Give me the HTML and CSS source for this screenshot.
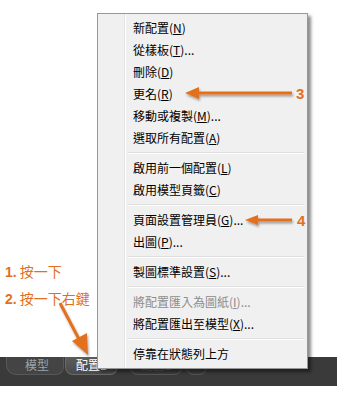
FILE: index.html
```html
<!DOCTYPE html>
<html lang="zh-Hant">
<head>
  <meta charset="UTF-8" />
  <meta name="viewport" content="width=device-width, initial-scale=1" />
  <title>配置頁籤選單</title>
  <link rel="stylesheet" href="styles.css">
</head>
<body>
  <main class="stage">
    <div class="notes">
      <p class="note"><b>1.</b> 按一下</p>
      <p class="note"><b>2.</b> 按一下右鍵</p>
    </div>

    <!-- layout tabs at the bottom of the drawing area -->
    <nav class="tabbar">
      <div class="tabs">
        <span class="tab tab-model">模型</span>
        <span class="tab tab-active">配置1</span>
        <span class="tab tab-dim">配置2</span>
        <span class="tab tab-add">+</span>
      </div>
    </nav>

    <!-- context menu opened on the layout tab -->
    <ul class="menu" role="menu">
      <li class="item">新配置(<u>N</u>)</li>
      <li class="item">從樣板(<u>T</u>)...</li>
      <li class="item">刪除(<u>D</u>)</li>
      <li class="item">更名(<u>R</u>)</li>
      <li class="item">移動或複製(<u>M</u>)...</li>
      <li class="item">選取所有配置(<u>A</u>)</li>
      <li class="sep"></li>
      <li class="item">啟用前一個配置(<u>L</u>)</li>
      <li class="item">啟用模型頁籤(<u>C</u>)</li>
      <li class="sep"></li>
      <li class="item">頁面設置管理員(<u>G</u>)...</li>
      <li class="item">出圖(<u>P</u>)...</li>
      <li class="sep"></li>
      <li class="item">製圖標準設置(<u>S</u>)...</li>
      <li class="sep"></li>
      <li class="item disabled">將配置匯入為圖紙(<u>I</u>)...</li>
      <li class="item">將配置匯出至模型(<u>X</u>)...</li>
      <li class="sep"></li>
      <li class="item">停靠在狀態列上方</li>
    </ul>

    <svg class="arrows" width="352" height="396" viewBox="0 0 352 396" aria-hidden="true">
      <defs>
        <filter id="shade" x="-10%" y="-10%" width="130%" height="150%">
          <feDropShadow dx="1" dy="2" stdDeviation="1" flood-color="#000" flood-opacity="0.35"/>
        </filter>
      </defs>
      <g filter="url(#shade)" fill="#e36f1e" stroke="#e36f1e">
        <line x1="196" y1="93" x2="292" y2="93" stroke-width="3"/>
        <polygon points="185,93 199,87 199,99" stroke="none"/>
        <line x1="255" y1="220" x2="292" y2="220" stroke-width="3"/>
        <polygon points="245,220 258,215 258,225" stroke="none"/>
        <line x1="60" y1="303" x2="80" y2="341" stroke-width="3"/>
        <polygon points="88,355 72,341 87,333" stroke="none"/>
      </g>
      <text x="296" y="99" class="num">3</text>
      <text x="297" y="226" class="num">4</text>
    </svg>
  </main>
</body>
</html>
```

FILE: styles.css
```css
:root {
  --orange: #e36f1e;
  --menu-bg: #f0f0f0;
  --menu-border: #979797;
  --cjk: "Noto Sans CJK TC", "Noto Sans", sans-serif;
}
body {
  margin: 0;
  background: #fff;
  font-family: var(--cjk);
}
.stage {
  position: relative;
  width: 352px;
  height: 396px;
  display: flex;
  flex-direction: column;
  justify-content: flex-end;
  padding-bottom: 10px;
  box-sizing: border-box;
  overflow: hidden;
}
.notes {
  display: flex;
  flex-direction: column;
  gap: 6px;
  padding-left: 5px;
  margin-bottom: 48px;
}
.note {
  margin: 0;
  font-size: 14px;
  line-height: 20px;
  color: var(--orange);
}
.note b {
  font-family: "Liberation Sans", sans-serif;
  font-weight: 700;
}
.tabbar {
  width: 337px;
  height: 29px;
  background: #3a3a3a;
}
.tabs {
  display: flex;
  align-items: flex-start;
  height: 18px;
  padding-left: 6px;
}
.tab {
  height: 17px;
  line-height: 16px;
  font-size: 12px;
  padding: 0 10px;
  border-radius: 0 0 8px 8px;
  color: #9aa4ad;
  border: 1px solid #585858;
  border-top: none;
  background: #444;
}
.tab-model {
  padding: 0 14px 0 18px;
  border-radius: 0 0 8px 10px;
}
.tab-active {
  margin-left: 1px;
  background: linear-gradient(#5c5c5c, #4a4a4a);
  color: #fff;
  border-color: #6a6a6a;
}
.tab-dim {
  margin-left: 12px;
  color: #5c5c5c;
  background: #3c3c3c;
  border-color: #555;
}
.tab-add {
  margin-left: 4px;
  padding: 0 6px;
  color: #5c5c5c;
  background: #3c3c3c;
  border-color: #555;
}
.menu {
  position: absolute;
  left: 97px;
  top: 13px;
  width: 211px;
  margin: 0;
  padding: 3px 2px;
  box-sizing: border-box;
  list-style: none;
  border: 1px solid var(--menu-border);
  background: linear-gradient(to right, var(--menu-bg) 26px, #e2e3e3 26px, #e2e3e3 27px, #fff 27px, #fff 28px, var(--menu-bg) 28px);
  box-shadow: 3px 3px 3px rgba(0, 0, 0, 0.45);
  font-size: 12px;
  color: #000;
}
.item {
  height: 22px;
  line-height: 22px;
  padding-left: 33px;
  white-space: nowrap;
}
.item u {
  text-underline-offset: 1px;
}
.item.disabled {
  color: #8d8d8d;
}
.sep {
  height: 8px;
  margin-left: 28px;
  margin-right: 1px;
  background: linear-gradient(transparent 3px, #e0e0e0 3px, #e0e0e0 4px, #fff 4px, #fff 5px, transparent 5px);
}
.arrows {
  position: absolute;
  left: 0;
  top: 0;
  pointer-events: none;
}
.num {
  font-family: "Liberation Sans", sans-serif;
  font-weight: 700;
  font-size: 15px;
  fill: var(--orange);
}
```
